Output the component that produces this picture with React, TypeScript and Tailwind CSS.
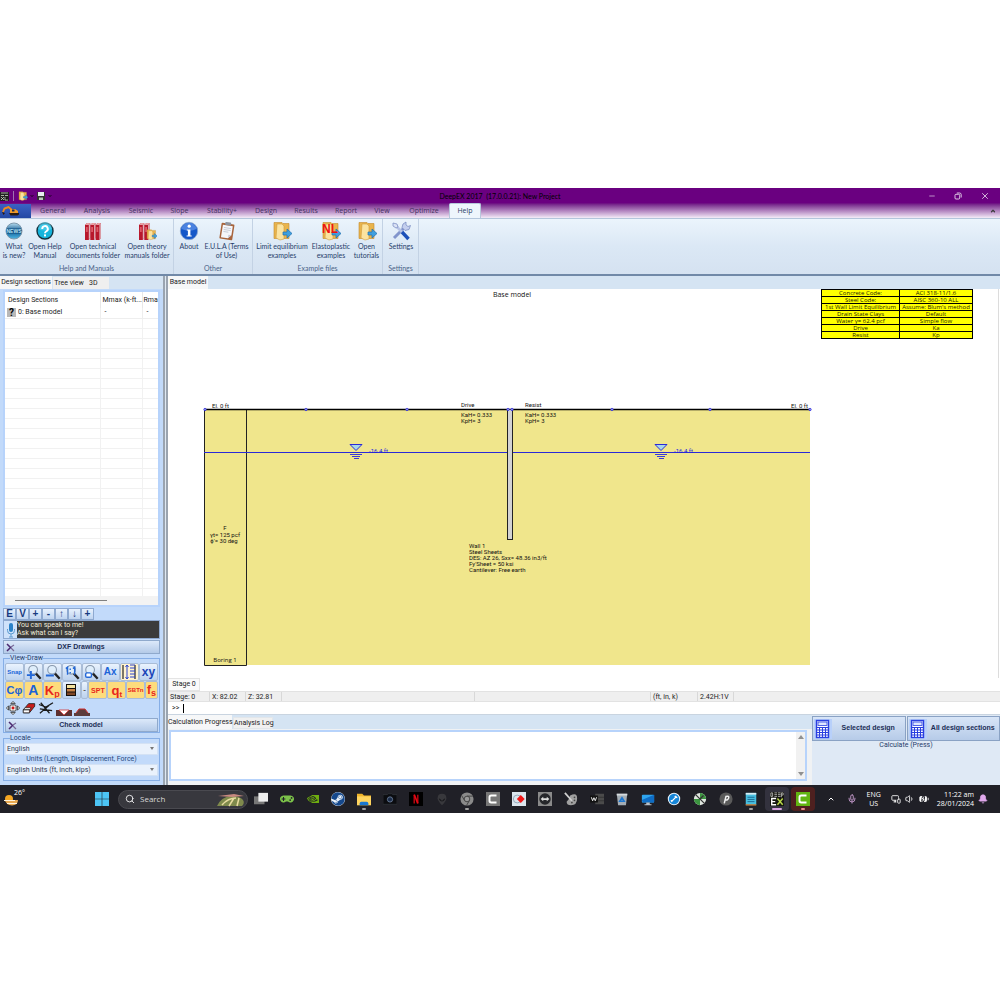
import type { ReactNode } from 'react';
import {
  BatteryCharging,
  Bell,
  ChevronDown,
  ChevronUp,
  Mic,
  Minus,
  MonitorSmartphone,
  Search,
  Volume1,
  X,
} from 'lucide-react';
import { FaGamepad, FaSteam } from 'react-icons/fa';
import { SiNvidia } from 'react-icons/si';

/* ---------- ribbon icons ---------- */

function NewsIcon() {
  return (
    <svg viewBox="0 0 20 20" className="h-5 w-5">
      <defs>
        <linearGradient id="news" x1="0" y1="0" x2="0" y2="1">
          <stop offset="0" stopColor="#b9def0" />
          <stop offset="0.5" stopColor="#125a92" />
          <stop offset="1" stopColor="#4db8e6" />
        </linearGradient>
      </defs>
      <circle cx="10" cy="10" r="8" fill="url(#news)" stroke="#7c98ac" strokeWidth="1" />
      <rect x="2.500" y="7.500" width="15" height="5" rx="1" fill="#0f4c80" />
      <text x="10" y="11.800" textAnchor="middle" fontSize="5" fontWeight="bold" fill="#b8e4f8" fontFamily="Liberation Sans, sans-serif">
        NEWS
      </text>
    </svg>
  );
}

function HelpIcon() {
  return (
    <svg viewBox="0 0 20 20" className="h-5 w-5">
      <circle cx="10" cy="10" r="8" fill="#14b4dc" stroke="#15333f" strokeWidth="1.400" />
      <path d="M3 8a7 7 0 0 1 14 0q-7 3-14 0z" fill="#5fd6f0" opacity="0.6" />
      <path d="M7.200 8a2.800 2.800 0 1 1 4.200 2.300q-1.400 .8-1.400 2" fill="none" stroke="#fff" strokeWidth="1.900" />
      <rect x="9" y="13.400" width="2" height="2" fill="#fff" />
    </svg>
  );
}

function Binders({ count }: { count: number }) {
  return (
    <g>
      {Array.from({ length: count }, (_, i) => (
        <g key={i} transform={`translate(${2 + i * 5.3} 0)`}>
          <path d="M0 4l2-2h3.200v15L3.800 19H0z" fill="#b8182c" />
          <path d="M0 4l2-2h3.200L3.800 4z" fill="#e8a0a4" />
          <path d="M3.800 4l1.400-2v15l-1.400 2z" fill="#e0b0b8" />
          <rect x="0.900" y="6" width="1.800" height="5" fill="#dd5a66" />
        </g>
      ))}
    </g>
  );
}

function BindersIcon() {
  return (
    <svg viewBox="0 0 20 20" className="h-5 w-5">
      <Binders count={3} />
    </svg>
  );
}

function FolderShape() {
  return (
    <g>
      <path d="M2 1.500h8l1 1h6v15H2z" fill="#e9b44c" stroke="#c48a2b" strokeWidth="0.6" />
      <path d="M5 3h5l2 2v13l-4 1-4-2z" fill="#fbe3a0" stroke="#d09a3a" strokeWidth="0.6" />
      <path d="M11 11h4V8l5 4.500-5 4.500v-3h-4z" fill="#3fa0e0" stroke="#1f6fae" strokeWidth="0.7" />
    </g>
  );
}

function BinderFolderIcon() {
  return (
    <svg viewBox="0 0 20 20" className="h-5 w-5">
      <Binders count={2} />
      <g transform="translate(9 8) scale(0.56)">
        <FolderShape />
      </g>
    </svg>
  );
}

function InfoIcon() {
  return (
    <svg viewBox="0 0 20 20" className="h-5 w-5">
      <circle cx="10" cy="10" r="8.700" fill="#1457c8" stroke="#8fa9cf" strokeWidth="0.800" />
      <path d="M2.500 8a7.600 7.600 0 0 1 15 0q-7 3.400-15 0z" fill="#6f9ff0" opacity="0.6" />
      <circle cx="10.200" cy="5.200" r="1.600" fill="#fff" />
      <path d="M7.800 8.400h3.600v6h1.300v1.200H7.600v-1.200h1.300V9.600H7.800z" fill="#fff" />
    </svg>
  );
}

function ClipboardIcon() {
  return (
    <svg viewBox="0 0 20 20" className="h-5 w-5">
      <g transform="rotate(9 10 10)">
        <rect x="3.500" y="2.500" width="13" height="16" rx="1" fill="#a8643c" />
        <path d="M5 4.500h10v9l-3 3.500H5z" fill="#f5f6fa" />
        <path d="M15 13.500l-3 3.500v-3.500z" fill="#c6cbd8" />
        <rect x="7" y="1.200" width="6" height="3" rx="1" fill="#8d939e" />
        <path d="M6.500 7h7M6.500 9h7M6.500 11h5" stroke="#b7bdcb" strokeWidth="0.700" />
      </g>
    </svg>
  );
}

function FolderIcon() {
  return (
    <svg viewBox="0 0 20 20" className="h-5 w-5">
      <FolderShape />
    </svg>
  );
}

function NlFolderIcon() {
  return (
    <svg viewBox="0 0 20 20" className="h-5 w-5">
      <FolderShape />
      <text x="1" y="12" fontSize="12" fontWeight="bold" fill="#ee1111" fontFamily="Liberation Sans, sans-serif">
        NL
      </text>
    </svg>
  );
}

function ToolsIcon() {
  return (
    <svg viewBox="0 0 20 20" className="h-5 w-5">
      <path d="M3 17L14 6" stroke="#8295cc" strokeWidth="3" />
      <path d="M12 3l3-2 0 3 2 1.500 2.500-1-1.500 4-4 1-3-3z" fill="#c4cfee" stroke="#7486bf" strokeWidth="0.700" />
      <path d="M4 4l7 7" stroke="#b7c3e6" strokeWidth="2.600" />
      <path d="M2 2l4 1 1 3-2 1-3-2z" fill="#dbe2f5" stroke="#7486bf" strokeWidth="0.700" />
      <path d="M11 11l6.500 7" stroke="#1c50b8" strokeWidth="3.400" />
    </svg>
  );
}

/* ---------- ribbon ---------- */

const TABS = [
  { name: 'General', width: 'w-11' },
  { name: 'Analysis', width: 'w-11' },
  { name: 'Seismic', width: 'w-11' },
  { name: 'Slope', width: 'w-[33px]' },
  { name: 'Stability+', width: 'w-[52px]' },
  { name: 'Design', width: 'w-9' },
  { name: 'Results', width: 'w-11' },
  { name: 'Report', width: 'w-9' },
  { name: 'View', width: 'w-9' },
  { name: 'Optimize', width: 'w-12' },
];

interface RibbonItem {
  lines: string[];
  icon: ReactNode;
  width: string;
}

const GROUPS: { title: string; width: string; items: RibbonItem[] }[] = [
  {
    title: 'Help and Manuals',
    width: 'w-[174px]',
    items: [
      { lines: ['What', 'is new?'], icon: <NewsIcon />, width: 'w-7' },
      { lines: ['Open Help', 'Manual'], icon: <HelpIcon />, width: 'w-[34px]' },
      { lines: ['Open technical', 'documents folder'], icon: <BindersIcon />, width: 'w-[62px]' },
      { lines: ['Open theory', 'manuals folder'], icon: <BinderFolderIcon />, width: 'w-[46px]' },
    ],
  },
  {
    title: 'Other',
    width: 'w-[79px]',
    items: [
      { lines: ['About'], icon: <InfoIcon />, width: 'w-[30px]' },
      { lines: ['E.U.L.A (Terms', 'of Use)'], icon: <ClipboardIcon />, width: 'w-[45px]' },
    ],
  },
  {
    title: 'Example files',
    width: 'w-[130px]',
    items: [
      { lines: ['Limit equilibrium', 'examples'], icon: <FolderIcon />, width: 'w-[58px]' },
      { lines: ['Elastoplastic', 'examples'], icon: <NlFolderIcon />, width: 'w-10' },
      { lines: ['Open', 'tutorials'], icon: <FolderIcon />, width: 'w-[31px]' },
    ],
  },
  {
    title: 'Settings',
    width: 'w-9',
    items: [{ lines: ['Settings'], icon: <ToolsIcon />, width: 'w-9' }],
  },
];

function TitleBar() {
  return (
    <div className="flex h-4 items-center justify-between">
      <div className="flex w-24 items-center gap-1">
        <svg viewBox="0 0 9 9" className="h-[9px] w-[9px]">
          <rect width="9" height="9" fill="#222" />
          <path d="M1 1h7M1 3.500h3M5 3.500h3M1 8l3-3M1 5l3 3M5 5v3h3" stroke="#c8d8c0" strokeWidth="0.800" />
        </svg>
        <span className="h-2.5 w-px bg-[#a070b0]" />
        <svg viewBox="0 0 20 20" className="h-2.5 w-2.5">
          <FolderShape />
        </svg>
        <ChevronDown className="-mx-0.5 h-1 w-1 text-black" strokeWidth={5} />
        <svg viewBox="0 0 10 10" className="h-2.5 w-2.5">
          <path d="M1 1h8v8H1z" fill="#333" />
          <path d="M2 1h6v4H2z" fill="#e8ecf0" />
          <path d="M3 6.500h4V9H3z" fill="#b8c8b8" />
        </svg>
        <ChevronDown className="-mx-0.5 h-1 w-1 text-black" strokeWidth={5} />
      </div>
      <h1 className="font-[Lato,sans-serif] text-[7px] leading-4 text-black">DeepEX 2017&nbsp; (17.0.0.21): New Project</h1>
      <div className="flex w-24 items-center justify-end gap-[18px] pr-2.5 text-[#e6d8ec]">
        <button type="button" aria-label="Minimize">
          <Minus className="h-2 w-2" />
        </button>
        <button type="button" aria-label="Restore">
          <svg viewBox="0 0 8 8" className="h-2 w-2" fill="none" stroke="currentColor" strokeWidth="0.900">
            <rect x="1" y="2.300" width="4.700" height="4.700" rx="1" />
            <path d="M2.800 1h2.700q1.700 0 1.700 1.700v2.800" />
          </svg>
        </button>
        <button type="button" aria-label="Close">
          <X className="h-2.5 w-2.5" />
        </button>
      </div>
    </div>
  );
}

function RibbonTabs() {
  return (
    <nav className="flex h-[14px] items-end text-[7px] leading-[14px] text-[#43305e]">
      <button
        type="button"
        aria-label="Application menu"
        className="flex h-[14px] w-[31px] items-center justify-start bg-linear-to-b from-[#3b62c4] to-[#2348a4] pl-0.5"
      >
        <svg viewBox="0 0 18 10" className="h-2.5 w-[18px]">
          <path d="M1 6l1.500-3.500 4-1.500 4 3.500" fill="none" stroke="#f08c1c" strokeWidth="1.900" />
          <path d="M0 6l3 1-1.500 2z" fill="#2a1a10" />
          <path d="M8 3h5l3 2v2H8z" fill="#f09a28" />
          <path d="M7 7h10v1.500l-1.500 1h-7z" fill="#2a1a10" />
          <rect x="10" y="3.500" width="2.500" height="2" fill="#1b2c55" />
        </svg>
      </button>
      {TABS.map((tab) => (
        <button key={tab.name} type="button" className={`${tab.width} text-center`}>
          {tab.name}
        </button>
      ))}
      <button type="button" className="ml-px h-[15px] w-8 rounded-t-xs border border-b-0 border-[#b8c8dc] bg-[#eef5fc] text-center text-[#2c3c66]">
        Help
      </button>
      <button type="button" aria-label="Collapse ribbon" className="ml-auto h-full pr-1">
        <ChevronUp className="h-1.5 w-1.5 text-[#3c3c3c]" strokeWidth={5} />
      </button>
    </nav>
  );
}

function Ribbon() {
  return (
    <div className="flex border-t border-b-2 border-t-[#b4c6dc] border-b-[#7189a8] bg-linear-to-b from-[#ebf4fc] via-[#dbe8f5] to-[#d5e2f1] font-[Lato,sans-serif] text-[7px] text-[#27406b]">
      {GROUPS.map((group) => (
        <section key={group.title} className={`${group.width} flex flex-col border-r border-[#c3d2e4]`}>
          <div className="flex h-[43px] items-start pt-0.5">
            {group.items.map((item, i) => (
              <button key={i} type="button" className={`${item.width} flex shrink-0 flex-col items-center whitespace-nowrap leading-[9px]`}>
                <span className="mb-px">{item.icon}</span>
                {item.lines.map((line) => (
                  <span key={line}>{line}</span>
                ))}
              </button>
            ))}
          </div>
          <h2 className="text-center leading-[12px] text-[#4b6388]">{group.title}</h2>
        </section>
      ))}
    </div>
  );
}

/* ---------- left panel ---------- */

function DesignList() {
  return (
    <div className="mx-[3px] mt-px border-2 border-[#b7d3fb] bg-white">
      <div className="h-[304px] overflow-hidden">
        <table className="w-full table-fixed border-collapse">
          <thead>
            <tr className="h-4 text-left align-middle">
              <th className="border-r border-[#e8e8e8] pl-[3px] font-normal">Design Sections</th>
              <th className="w-[42px] border-r border-[#e8e8e8] pl-0.5 font-normal whitespace-nowrap">Mmax (k-ft...</th>
              <th className="w-4 pl-px font-normal whitespace-nowrap">Rma</th>
            </tr>
          </thead>
          <tbody>
            <tr className="h-[10px] leading-[9px]">
              <td className="border-r border-b border-[#eeeeee]">
                <div className="flex items-center gap-0.5 pl-0.5">
                  <span className="h-[9px] w-[9px] bg-[#b8b8b8] text-center text-[10px] leading-[9px] font-bold text-black">?</span>
                  <span>0: Base model</span>
                </div>
              </td>
              <td className="border-r border-b border-[#eeeeee] pl-1">-</td>
              <td className="border-b border-[#eeeeee] pl-1">-</td>
            </tr>
            {Array.from({ length: 28 }, (_, i) => (
              <tr key={i} className="h-[10px]">
                <td className="border-r border-b border-[#f1f1f1]" />
                <td className="border-r border-b border-[#f1f1f1]" />
                <td className="border-b border-[#f1f1f1]" />
              </tr>
            ))}
          </tbody>
        </table>
      </div>
      <div className="flex h-[9px] items-center bg-[#f3f3f3] pl-[10px]">
        <span className="h-px w-[92px] bg-[#808080]" />
      </div>
    </div>
  );
}

function PanelButton({ children }: { children: ReactNode }) {
  return (
    <button
      type="button"
      className="flex h-[14px] w-full items-center border border-[#8fa9cc] bg-linear-to-b from-[#dce9fa] to-[#b4cae8] px-0.5 font-['Liberation_Sans',Arial,sans-serif] font-bold text-[#1d2f57]"
    >
      <svg viewBox="0 0 9 9" className="h-[9px] w-[9px]" fill="none">
        <path d="M1 1l3.500 3.500L1 8" stroke="#4b2a72" strokeWidth="1.500" />
        <path d="M5 4l3-2M5 5l3 3" stroke="#7a6a98" strokeWidth="1.200" />
      </svg>
      <span className="flex-1 pr-2.5 text-center">{children}</span>
    </button>
  );
}

function Magnifier({ children }: { children?: ReactNode }) {
  return (
    <svg viewBox="0 0 18 18" className="h-4 w-4">
      <path d="M10.500 10l6 6.500" stroke="#222" strokeWidth="2.600" />
      <circle cx="8" cy="6.500" r="4.900" fill="#dfeefb" stroke="#8898ac" strokeWidth="1.200" />
      {children}
    </svg>
  );
}

const plain = 'bg-linear-to-b from-[#eaf3fe] to-[#bcd2ee] text-[#1b63d8]';
const lit = 'bg-[#fddc7c] text-[#1b63d8]';
const litRed = 'bg-[#fddc7c] text-[#e8261c]';

const DRAW_TOOLS: { name: string; style: string; content: ReactNode }[] = [
  { name: 'Snap', style: plain, content: <span className="text-[6px]">Snap</span> },
  {
    name: 'Zoom in',
    style: plain,
    content: (
      <Magnifier>
        <path d="M1 12.500h9M5.500 8v9" stroke="#2368d8" strokeWidth="2.200" />
      </Magnifier>
    ),
  },
  {
    name: 'Zoom out',
    style: plain,
    content: (
      <Magnifier>
        <path d="M1 13h9" stroke="#2368d8" strokeWidth="2.400" />
      </Magnifier>
    ),
  },
  {
    name: 'Zoom 1:1',
    style: plain,
    content: (
      <Magnifier>
        <path d="M2 5l2-1.500V12M7 5v1.700M7 9v1.700M10 5l2-1.500V12" fill="none" stroke="#2368d8" strokeWidth="1.600" />
      </Magnifier>
    ),
  },
  {
    name: 'Zoom window',
    style: plain,
    content: (
      <Magnifier>
        <rect x="3" y="10" width="6.500" height="5" rx="1.500" fill="#fff" stroke="#2368d8" strokeWidth="1.600" />
      </Magnifier>
    ),
  },
  { name: 'Axis', style: plain, content: <span className="text-[10px]">Ax</span> },
  {
    name: 'Wall dimensions',
    style: 'bg-[#fff3cf] text-[#1b63d8]',
    content: (
      <svg viewBox="0 0 16 16" className="h-4 w-4" fill="none">
        <path d="M2 1v14M14 1v14" stroke="#222" strokeWidth="1.200" />
        <path d="M6 1v14M4.500 3l1.500-2 1.500 2M4.500 13l1.500 2 1.500-2M9 1h5M9 4h5M9 7h5M9 10h5M9 13h5" stroke="#2a45d0" strokeWidth="1" />
      </svg>
    ),
  },
  { name: 'XY', style: plain, content: <span className="text-[12px] text-[#1a45b8]">xy</span> },
  { name: 'Cohesion', style: lit, content: <span className="text-[11px]">Cφ</span> },
  { name: 'Labels', style: lit, content: <span className="text-[14px]">A</span> },
  {
    name: 'Kp',
    style: litRed,
    content: (
      <span className="text-[13px]">
        K<sub className="text-[9px]">p</sub>
      </span>
    ),
  },
  {
    name: 'Soil layers',
    style: plain,
    content: (
      <svg viewBox="0 0 12 14" className="h-3.5 w-3">
        <rect x="1" y="1" width="10" height="12" fill="#17110c" />
        <rect x="2" y="2" width="8" height="3" fill="#f5e3a0" />
        <rect x="2" y="6" width="8" height="2.500" fill="#c98448" />
        <rect x="2" y="9.500" width="8" height="2.500" fill="#7d4524" />
      </svg>
    ),
  },
  { name: 'More', style: plain, content: <span className="text-[8px] text-[#555]">-</span> },
  { name: 'SPT', style: litRed, content: <span className="text-[7px]">SPT</span> },
  {
    name: 'qt',
    style: litRed,
    content: (
      <span className="text-[13px]">
        q<sub className="text-[8px]">t</sub>
      </span>
    ),
  },
  { name: 'SBTn', style: litRed, content: <span className="text-[6px]">SBTn</span> },
  {
    name: 'fs',
    style: litRed,
    content: (
      <span className="text-[12px]">
        f<sub className="text-[9px]">s</sub>
      </span>
    ),
  },
];

function ToolButton({ tool }: { tool: (typeof DRAW_TOOLS)[number] }) {
  return (
    <button
      type="button"
      aria-label={tool.name}
      className={`${tool.style} flex h-[18px] items-center justify-center overflow-hidden rounded-xs border border-[#a9bcd6] leading-none font-bold`}
    >
      {tool.content}
    </button>
  );
}

function SketchTools() {
  return (
    <div className="flex h-[18px] items-center gap-[2px] pl-px">
      <svg viewBox="0 0 16 16" className="h-3.5 w-3.5" fill="none" stroke="#333">
        <path d="M8 .5l2.500 2.500h-5zM8 15.500l2.500-2.500h-5zM.5 8L3 5.500v5zM15.500 8L13 5.500v5z" fill="#fff" />
        <rect x="4.500" y="4.500" width="7" height="7" rx="1.500" fill="#eee" />
        <circle cx="8" cy="8" r="1.700" fill="#d01818" stroke="none" />
      </svg>
      <svg viewBox="0 0 16 16" className="h-3.5 w-3.5">
        <path d="M1.500 10l6-7h7v3l-6 7.500h-7z" fill="#c81c1c" stroke="#222" />
        <path d="M1.500 10h7v3.500h-7zM1.500 10l2-2.300h7L8.500 10z" fill="#fff" stroke="#222" strokeWidth="0.800" />
      </svg>
      <svg viewBox="0 0 18 16" className="h-3.5 w-4" stroke="#1a1a1a" fill="none">
        <path d="M1 4l8 3 8-5M2 9l14 2M2 14L15 3M3 2l5 6 5 6" strokeWidth="1.400" />
      </svg>
      <svg viewBox="0 0 16 10" className="h-2.5 w-4 self-end">
        <path d="M0 3h3l5 5 5-5h3v6H0z" fill="#5c3030" />
        <path d="M3 3h10l-5 5z" fill="#fff" stroke="#d03030" strokeWidth="0.800" />
      </svg>
      <svg viewBox="0 0 16 10" className="h-2.5 w-4 self-end">
        <path d="M0 6h2l3-4h6l3 4h2v3H0z" fill="#5c3c3c" />
        <path d="M2 6l3-4h6l3 4" fill="none" stroke="#d03030" />
      </svg>
    </div>
  );
}

function LocaleSelect({ label, value }: { label: string; value: string }) {
  return (
    <div className="relative">
      <select aria-label={label} className="h-3 w-full appearance-none border border-[#d4e2f4] bg-[#eaf2fc] pl-px text-[7px] leading-[10px] text-[#2c3a55]">
        <option>{value}</option>
      </select>
      <svg viewBox="0 0 4 3" className="pointer-events-none absolute top-1 right-1 h-[3px] w-1">
        <path d="M0 0h4L2 3z" fill="#777" />
      </svg>
    </div>
  );
}

function LeftPanel() {
  return (
    <aside className="flex w-[163px] shrink-0 flex-col bg-[#c2dafa]">
      <div className="flex h-[13px] bg-[#d5e4f3] leading-[13px]">
        <button type="button" className="w-[52px] bg-[#f6f7f8]">Design sections</button>
        <button type="button" className="mt-px ml-px w-8 bg-[#efefef]">Tree view</button>
        <button type="button" className="mt-px w-6 bg-[#efefef] pl-1 text-left">3D</button>
      </div>
      <DesignList />
      <div className="mx-[3px] mt-px flex h-3 font-['Liberation_Sans',Arial,sans-serif]">
        {['E', 'V', '+', '-', '↑', '↓', '+'].map((label, i) => (
          <button
            key={i}
            type="button"
            className="flex w-[13px] items-center justify-center border border-[#8ea9d0] bg-linear-to-b from-[#e8f1fd] to-[#bfd4f0] text-[10px] leading-none font-bold text-[#173a80]"
          >
            {label}
          </button>
        ))}
      </div>
      <div className="mx-[3px] flex h-[19px] border border-[#8ea9d0]">
        <button type="button" aria-label="Speak" className="flex w-[13px] items-center justify-center bg-[#cfe2fa]">
          <svg viewBox="0 0 10 16" className="h-4 w-2.5" fill="none">
            <rect x="3" y="1" width="4" height="9" rx="2" fill="#2b82c8" />
            <path d="M1.500 7v1.500a3.500 3.500 0 0 0 7 0V7M5 12v3M3 15h4" stroke="#5a9ad0" />
          </svg>
        </button>
        <p className="flex-1 bg-[#3b3b3b] text-[7px] leading-[8px] text-[#f0ead8]">
          You can speak to me!
          <br />
          Ask what can I say?
        </p>
      </div>
      <div className="mx-[3px] mt-px">
        <PanelButton>DXF Drawings</PanelButton>
      </div>
      <fieldset className="mx-[3px] min-w-0 border border-[#86aee6] px-px">
        <legend className="ml-[5px] h-[9px] leading-[9px] text-[#26406c]">View-Draw</legend>
        <div className="grid grid-cols-8 font-['Liberation_Sans',Arial,sans-serif]">
          {DRAW_TOOLS.slice(0, 8).map((tool) => (
            <ToolButton key={tool.name} tool={tool} />
          ))}
        </div>
        <div className="grid grid-cols-[19fr_19fr_19fr_19fr_8fr_19fr_19fr_19fr_13fr] font-['Liberation_Sans',Arial,sans-serif]">
          {DRAW_TOOLS.slice(8).map((tool) => (
            <ToolButton key={tool.name} tool={tool} />
          ))}
        </div>
        <SketchTools />
        <div className="mt-px">
          <PanelButton>Check model</PanelButton>
        </div>
      </fieldset>
      <fieldset className="mx-[3px] mt-px min-w-0 border border-[#86aee6] px-px pb-1">
        <legend className="ml-[5px] h-[9px] leading-[9px] text-[#26406c]">Locale</legend>
        <LocaleSelect label="Language" value="English" />
        <p className="text-center leading-[9px] text-[#27487c]">Units (Length, Displacement, Force)</p>
        <LocaleSelect label="Units" value="English Units (ft, inch, kips)" />
      </fieldset>
    </aside>
  );
}

/* ---------- drawing ---------- */

const GROUND_POINTS = [37, 138, 239, 340, 344, 444, 542, 642];

const WALL_NOTES = [
  'Wall 1',
  'Steel Sheets',
  'DES: AZ 26, Sxx= 48.36 in3/ft',
  "Fy'Sheet = 50 ksi",
  'Cantilever:  Free earth',
];

function WaterMark({ x }: { x: number }) {
  return (
    <g>
      <path d={`M${x - 6} 155.500h12l-6 6z`} fill="#a8d8e8" stroke="#2a2ad8" />
      <path d={`M${x - 6} 165.500h12M${x - 4} 167.500h8M${x - 2} 169.500h5`} fill="none" stroke="#3a3ad8" />
      <text x={x + 13} y="164" fill="#1a1ae0">
        -16.4 ft
      </text>
    </g>
  );
}

function ModelDrawing() {
  return (
    <svg viewBox="0 0 830 389" className="block w-full" fontFamily="Roboto, sans-serif" fontSize="6" fill="#111">
      <text x="344" y="8" textAnchor="middle" fontSize="7" fontFamily="Open Sans, sans-serif">
        Base model
      </text>
      <rect x="36" y="120" width="606" height="256" fill="#f0e68c" />
      <path d="M36.500 120v256.500h42V120" fill="none" stroke="#222" />
      <path d="M36 163.500h606" stroke="#2a2ad8" />
      <path d="M36 120.500h606" stroke="#000" strokeWidth="1.500" />
      <rect x="339.500" y="120.500" width="5" height="130" fill="#d3d3d3" stroke="#222" />
      {GROUND_POINTS.map((x) => (
        <circle key={x} cx={x} cy="120.500" r="1.200" fill="#a0a0f0" stroke="#2020d8" strokeWidth="0.700" />
      ))}
      <WaterMark x={188} />
      <WaterMark x={493} />
      <text x="44" y="119">El. 0 ft</text>
      <text x="623" y="119">El. 0 ft</text>
      <text x="293" y="118">Drive</text>
      <text x="293" y="128">KaH= 0.333</text>
      <text x="293" y="134">KpH= 3</text>
      <text x="357" y="118">Resist</text>
      <text x="357" y="128">KaH= 0.333</text>
      <text x="357" y="134">KpH= 3</text>
      {WALL_NOTES.map((note, i) => (
        <text key={note} x="301" y={259 + i * 6}>
          {note}
        </text>
      ))}
      <g textAnchor="middle">
        <text x="57" y="241">F</text>
        <text x="57" y="248">γt= 125 pcf</text>
        <text x="56" y="254">ϕ'= 30 deg</text>
        <text x="57" y="373" fontFamily="Open Sans, sans-serif">Boring 1</text>
      </g>
    </svg>
  );
}

const CODE_ROWS = [
  ['Concrete Code:', 'ACI 318-11/1.6'],
  ['Steel Code:', 'AISC 360-10 ALL'],
  ['1st Wall Limit Equilibrium', "Assume: Blum's method"],
  ['Drain State Clays', 'Default'],
  ['Water γ= 62.4 pcf', 'Simple flow'],
  ['Drive', 'Ka'],
  ['Resist', 'Kp'],
];

function CodeTable() {
  return (
    <table className="absolute top-0 right-[25px] border-collapse bg-[#ffff00] text-center font-['Open_Sans',sans-serif] text-[6px] leading-[6px] whitespace-nowrap text-[#222200]">
      <tbody>
        {CODE_ROWS.map(([name, value]) => (
          <tr key={name}>
            <td className="w-[78px] border border-black">{name}</td>
            <td className="w-[73px] border border-black">{value}</td>
          </tr>
        ))}
      </tbody>
    </table>
  );
}

/* ---------- bottom panel ---------- */

function CalculatorIcon() {
  return (
    <svg viewBox="0 0 18 20" className="h-5 w-[18px] shrink-0">
      <rect width="18" height="20" fill="#b8d0fa" />
      <rect x="2.500" y="1.500" width="12" height="17" fill="#fff" stroke="#2a3fe0" strokeWidth="1.400" />
      <rect x="4" y="3" width="9" height="3.500" fill="#dfe6ff" stroke="#2a3fe0" strokeWidth="0.800" />
      <path d="M2.500 8.500h12M2.500 11h12M2.500 13.500h12M2.500 16h12M5.500 8v10M8.500 8v10M11.500 8v10" stroke="#2a3fe0" />
    </svg>
  );
}

function CalcButton({ children }: { children: ReactNode }) {
  return (
    <button
      type="button"
      className="flex h-[25px] flex-1 items-center border border-[#8aa2c4] bg-linear-to-b from-[#d8e5f7] to-[#b6cbe8] pl-px font-['Liberation_Sans',Arial,sans-serif] font-bold whitespace-nowrap text-[#1d2f57]"
    >
      <CalculatorIcon />
      <span className="flex-1 text-center">{children}</span>
    </button>
  );
}

function BottomPanel() {
  return (
    <div className="flex flex-1 border-t border-[#c9d4e0] bg-[#d5e4f3]">
      <div className="flex flex-1 flex-col">
        <div className="flex items-end leading-[13px]">
          <button type="button" className="h-[14px] w-16 bg-[#f6f7f8] whitespace-nowrap">Calculation Progress</button>
          <button type="button" className="ml-px h-3 w-10 border border-[#e2e6ea] bg-[#f0f0f0] leading-[11px] whitespace-nowrap">Analysis Log</button>
        </div>
        <div className="flex flex-1 border-r-4 border-[#f0f2f4] bg-[#f0f2f4] p-px pb-1">
          <div className="flex flex-1 border-2 border-[#b7d3fb]">
            <textarea aria-label="Calculation progress" readOnly className="block h-full min-h-[47px] flex-1 resize-none bg-white" />
            <div className="flex w-[9px] flex-col items-center justify-between bg-[#f1f1f1] py-[3px]">
              <svg viewBox="0 0 6 4" className="h-1 w-1.5">
                <path d="M3 0l3 4H0z" fill="#909090" />
              </svg>
              <svg viewBox="0 0 6 4" className="h-1 w-1.5">
                <path d="M3 4l3-4H0z" fill="#909090" />
              </svg>
            </div>
          </div>
        </div>
      </div>
      <div className="w-[188px] bg-[#dfe9f5] pt-px">
        <div className="flex gap-px">
          <CalcButton>Selected design</CalcButton>
          <CalcButton>All design sections</CalcButton>
        </div>
        <p className="text-center leading-[8px] text-[#27406b]">Calculate (Press)</p>
      </div>
    </div>
  );
}

function Workspace() {
  return (
    <main className="flex min-w-0 flex-1 flex-col bg-white">
      <div className="flex h-[13px] bg-[#d5e4f3] leading-[13px]">
        <button type="button" className="w-10 bg-[#f6f7f8]">Base model</button>
      </div>
      <div className="relative mr-px border-r border-[#dcdcdc]">
        <ModelDrawing />
        <CodeTable />
      </div>
      <div className="flex">
        <button type="button" className="h-[13px] w-8 border border-[#e4e4e4] bg-[#fafafa] leading-[11px]">Stage 0</button>
      </div>
      <div className="flex h-[11px] border-y border-[#e2e2e2] bg-[#efefef] leading-[10px] whitespace-nowrap">
        <span className="w-[41px] pl-0.5">Stage: 0</span>
        <span className="w-9 border-l border-[#d8d8d8] pl-0.5">X: 82.02</span>
        <span className="w-9 border-l border-[#d8d8d8] pl-0.5">Z: 32.81</span>
        <span className="w-[193px] border-l border-[#d8d8d8]" />
        <span className="w-[176px] border-l border-[#d8d8d8]" />
        <span className="w-[47px] border-l border-[#d8d8d8] pl-0.5">(ft, in, k)</span>
        <span className="w-9 border-l border-[#d8d8d8] pl-0.5">2.42H:1V</span>
        <span className="flex-1 border-l border-[#d8d8d8]" />
      </div>
      <label className="flex h-3 items-center pl-1 leading-[10px]">
        &gt;&gt;
        <span className="ml-1 h-[9px] w-px bg-black" />
        <input aria-label="Command" className="flex-1 outline-none" />
      </label>
      <BottomPanel />
    </main>
  );
}

/* ---------- taskbar ---------- */

function Glyph({ children }: { children: ReactNode }) {
  return (
    <svg viewBox="0 0 16 16" className="h-3.5 w-3.5">
      {children}
    </svg>
  );
}

const APPS: { name: string; icon: ReactNode; mark?: string; tile?: string }[] = [
  {
    name: 'Task view',
    icon: (
      <Glyph>
        <rect x="0" y="5" width="12" height="9" fill="#777" />
        <rect x="5" y="1" width="11" height="10" fill="#eee" />
      </Glyph>
    ),
  },
  { name: 'Games', icon: <FaGamepad className="h-3.5 w-3.5 text-[#7cc24a]" /> },
  { name: 'NVIDIA', icon: <SiNvidia className="h-3.5 w-3 text-[#6fae10]" /> },
  { name: 'Steam', icon: <FaSteam className="h-3.5 w-3.5 rounded-full bg-[#e8f0f8] text-[#15488c]" /> },
  {
    name: 'File Explorer',
    mark: 'bg-[#a0a0a0] w-1',
    icon: (
      <Glyph>
        <path d="M0 2h6l2 2h8v11H0z" fill="#f0b429" />
        <path d="M0 5h16v10H0z" fill="#ffd45e" />
        <path d="M3 15v-2q0-2 2-2h6q2 0 2 2v2z" fill="#1b78d0" />
      </Glyph>
    ),
  },
  {
    name: 'Camera',
    icon: (
      <Glyph>
        <path d="M0 3h5l1-1h4l1 1h5v11H0z" fill="#0b0c10" stroke="#3a3d44" strokeWidth="0.600" />
        <circle cx="8" cy="8.500" r="3" fill="#1b2c48" stroke="#6a7d98" />
      </Glyph>
    ),
  },
  {
    name: 'Netflix',
    icon: (
      <Glyph>
        <rect width="16" height="16" fill="#000" />
        <path d="M6 3v10M10 3v10" stroke="#b00610" strokeWidth="1.800" />
        <path d="M6 3l4 10" stroke="#e50914" strokeWidth="1.800" />
      </Glyph>
    ),
  },
  {
    name: 'Alienware',
    icon: (
      <Glyph>
        <path d="M8 2q5 0 5 5 0 3-5 8-5-5-5-8 0-5 5-5z" fill="#38383c" />
        <path d="M4.500 7l3 2.500v1.500q-3-1-3-4zM11.500 7l-3 2.500v1.500q3-1 3-4z" fill="#151518" />
      </Glyph>
    ),
  },
  {
    name: 'Chrome',
    mark: 'bg-[#a0a0a0] w-1',
    icon: (
      <Glyph>
        <circle cx="8" cy="8" r="7.500" fill="#8a8a8a" />
        <path d="M8 4.700h6.800M5.200 9.600L1.700 3.800M10.800 9.600L7.500 15.300" stroke="#3c3c3c" />
        <circle cx="8" cy="8" r="3.200" fill="#999" stroke="#3c3c3c" />
      </Glyph>
    ),
  },
  {
    name: 'Capture',
    icon: (
      <Glyph>
        <rect width="16" height="16" fill="#777" />
        <path d="M12 4H6q-2 0-2 2v4q0 2 2 2h6" fill="none" stroke="#fff" strokeWidth="2.200" />
      </Glyph>
    ),
  },
  {
    name: 'Recorder',
    icon: (
      <Glyph>
        <rect width="16" height="16" fill="#dbe6ee" />
        <circle cx="6" cy="8" r="4.500" fill="none" stroke="#8aa0b4" />
        <path d="M10 3.500l4.500 4.500-4.500 4.500L5.500 8z" fill="#f01818" />
      </Glyph>
    ),
  },
  {
    name: 'TeamViewer',
    icon: (
      <Glyph>
        <rect width="16" height="16" fill="#8a8a8a" />
        <circle cx="8" cy="8" r="6.500" fill="#25262a" />
        <path d="M3 8l3-2.500V7h4V5.500L13 8l-3 2.500V9H6v1.500z" fill="#ddd" />
      </Glyph>
    ),
  },
  {
    name: 'Paint',
    icon: (
      <Glyph>
        <path d="M7 4q8-4 8 3 0 8-7 8-5 0-5-4 3-2 4-7z" fill="#a0a0a0" />
        <path d="M1 1l8 9" stroke="#d0d0d0" strokeWidth="2" />
        <circle cx="12" cy="6" r="1" fill="#444" />
        <circle cx="12" cy="9.500" r="1" fill="#444" />
        <circle cx="9" cy="12" r="1" fill="#444" />
      </Glyph>
    ),
  },
  {
    name: 'Word',
    icon: (
      <Glyph>
        <path d="M6 2h10v12H6z" fill="#4b4b4b" />
        <path d="M6 6h10M6 10h10" stroke="#333" />
        <rect y="4" width="9" height="8" fill="#111" />
        <path d="M1.500 6l1.500 4 1.500-3.500L6 10l1.500-4" fill="none" stroke="#fff" />
      </Glyph>
    ),
  },
  {
    name: 'Recycle Bin',
    icon: (
      <Glyph>
        <path d="M2 2h12l-1.500 13h-9z" fill="#a3acb4" />
        <path d="M2 2h12v2H2z" fill="#d5dadd" />
        <path d="M5.500 10.500l2.500-4 2.500 4z" fill="none" stroke="#1c76d0" strokeWidth="1.800" />
      </Glyph>
    ),
  },
  {
    name: 'Desktop',
    icon: (
      <Glyph>
        <rect x="1" y="3" width="14" height="9" rx="1" fill="#2fa4ee" />
        <path d="M1 9l14-6v8q0 1-1 1H2z" fill="#0f6cc4" />
        <path d="M6 12h4v2h2v1H4v-1h2z" fill="#b8c0c8" />
      </Glyph>
    ),
  },
  {
    name: 'Repair tool',
    icon: (
      <Glyph>
        <circle cx="8" cy="8" r="6.500" fill="#1585d8" stroke="#e6f2fb" strokeWidth="1.200" />
        <path d="M5 11l6-6M9 4.500l1 1.500 1.800.5M4.500 9.500l1.500 1.800" stroke="#fff" strokeWidth="1.500" />
      </Glyph>
    ),
  },
  {
    name: 'Green tool',
    icon: (
      <Glyph>
        <circle cx="8" cy="8" r="7" fill="#dfe6df" />
        <path d="M8 1a7 7 0 0 1 7 7H8zM8 15a7 7 0 0 1-7-7h7z" fill="#3c9440" />
        <path d="M3 3l10 10M8 8l4-4" stroke="#333" strokeWidth="1.500" />
      </Glyph>
    ),
  },
  {
    name: 'Pixel app',
    icon: (
      <Glyph>
        <circle cx="8" cy="8" r="7.500" fill="#5a5a5a" />
        <path d="M6 13l2-8q4-1 3 2-1 3-4 2" fill="none" stroke="#f0f0f0" strokeWidth="1.700" />
      </Glyph>
    ),
  },
  {
    name: 'Notepad',
    mark: 'bg-[#a0a0a0] w-1',
    icon: (
      <Glyph>
        <rect x="2" y="1" width="12" height="14" fill="#48bfe0" />
        <path d="M2 1h12v2H2z" fill="#d8eef4" />
        <path d="M4 6h8M4 8.500h8M4 11h8" stroke="#17608c" />
        <path d="M2 14h12v1.500H2z" fill="#c8742c" />
      </Glyph>
    ),
  },
  {
    name: 'DeepEX',
    mark: 'bg-[#d8a0e0] w-2.5',
    tile: 'bg-[#33323e]',
    icon: (
      <Glyph>
        <rect width="16" height="16" fill="#15150f" />
        <path d="M1 1v4h2V1zM5 1h3M5 3h3M5 5h3M9 1h3M9 3h3M9 5h3M13 6V1h2v2.500h-2" fill="none" stroke="#ddd" strokeWidth="0.800" />
        <path d="M7 7.500H2v7h5M2 11h4" fill="none" stroke="#fff" strokeWidth="1.600" />
        <path d="M8.500 7.500l6 7M14.500 7.500l-6 7" stroke="#b8d848" strokeWidth="1.700" />
      </Glyph>
    ),
  },
  {
    name: 'Camtasia',
    mark: 'bg-[#e88888] w-1',
    tile: 'bg-[#4e201f]',
    icon: (
      <Glyph>
        <rect width="16" height="16" fill="#62b512" />
        <path d="M12 4H6q-2 0-2 2v4q0 2 2 2h6" fill="none" stroke="#fff" strokeWidth="2.200" />
      </Glyph>
    ),
  },
];

function Taskbar() {
  return (
    <footer className="flex h-7 items-center bg-[#202027] font-['Open_Sans',sans-serif] text-[7px] text-white">
      <div className="flex w-[95px] items-center pl-1">
        <svg viewBox="0 0 16 16" className="h-4 w-4">
          <circle cx="5" cy="8" r="4" fill="#f5a623" />
          <path d="M1 9h13q0 5-6 5.500Q2 14 1 9z" fill="#e8a850" />
          <path d="M0 9.500h11M3 12.500h10" stroke="#fff3dc" />
        </svg>
        <span className="-ml-1.5 self-start leading-[4px]">26°</span>
      </div>
      <button type="button" aria-label="Start" className="w-[23px]">
        <svg viewBox="0 0 14 14" className="h-3.5 w-3.5">
          <path d="M0 0h6.700v6.700H0zM7.300 0H14v6.700H7.300zM0 7.300h6.700V14H0zM7.300 7.300H14V14H7.300z" fill="#4cc4f5" />
        </svg>
      </button>
      <label className="flex h-[19px] w-[130px] items-center gap-[5px] rounded-full border border-[#4a4a50] bg-[#38383e] pl-1.5">
        <Search className="h-2.5 w-2.5" />
        <input placeholder="Search" aria-label="Search" className="w-[72px] text-[8px] outline-none placeholder:text-[#d8d8d8]" />
        <svg viewBox="0 0 30 15" className="h-[15px] w-[30px]">
          <path d="M0 14q4-9 14-10 9 0 12 4 2 3-1 6z" fill="#7f8a4c" />
          <path d="M5 13q6-7 14-7M12 14l5-8M20 14l2-8" stroke="#e8dca0" strokeWidth="1.500" fill="none" />
          <path d="M1 4l16-2 10 2-12 1z" fill="#c88a80" />
        </svg>
      </label>
      <div className="grid w-[568px] grid-cols-[repeat(22,minmax(0,1fr))]">
        {APPS.map((app) => (
          <button
            key={app.name}
            type="button"
            aria-label={app.name}
            className={`${app.tile ?? ''} mx-px flex h-6 flex-col items-center justify-end gap-0.5 rounded-sm pb-px`}
          >
            {app.icon}
            <span className={`${app.mark ?? 'w-1'} h-0.5 rounded-full`} />
          </button>
        ))}
      </div>
      <div className="flex flex-1 items-center justify-end pr-3">
        <ChevronUp className="mr-3 h-2 w-2" strokeWidth={3} />
        <Mic className="mr-2.5 h-2.5 w-2.5 text-[#d8a8e0]" />
        <span className="mr-2.5 text-center leading-[9px]">
          ENG
          <br />
          US
        </span>
        <MonitorSmartphone className="mr-1 h-2.5 w-2.5" />
        <Volume1 className="mr-1 h-2.5 w-2.5" />
        <BatteryCharging className="mr-2 h-2.5 w-2.5 fill-white" />
        <span className="mr-1 text-right leading-[9px] whitespace-nowrap">
          11:22 am
          <br />
          28/01/2024
        </span>
        <Bell className="h-2.5 w-2.5 fill-[#e0a8ec] text-[#e0a8ec]" />
      </div>
    </footer>
  );
}

export default function App() {
  return (
    <div className="min-h-screen bg-white pt-[188px] font-[Roboto,Arial,sans-serif] text-[7px] text-[#1c1c24]">
      <header className="font-['Open_Sans',sans-serif]">
        <div className="bg-linear-to-b from-[#6a0080] via-[#6a0080] via-50% to-[#f4ecf8]">
          <TitleBar />
          <RibbonTabs />
        </div>
        <Ribbon />
      </header>
      <div className="flex">
        <LeftPanel />
        <div className="w-[5px] shrink-0 border-x-2 border-[#9aa4b0] bg-[#dfe9f3]" />
        <Workspace />
      </div>
      <Taskbar />
    </div>
  );
}
